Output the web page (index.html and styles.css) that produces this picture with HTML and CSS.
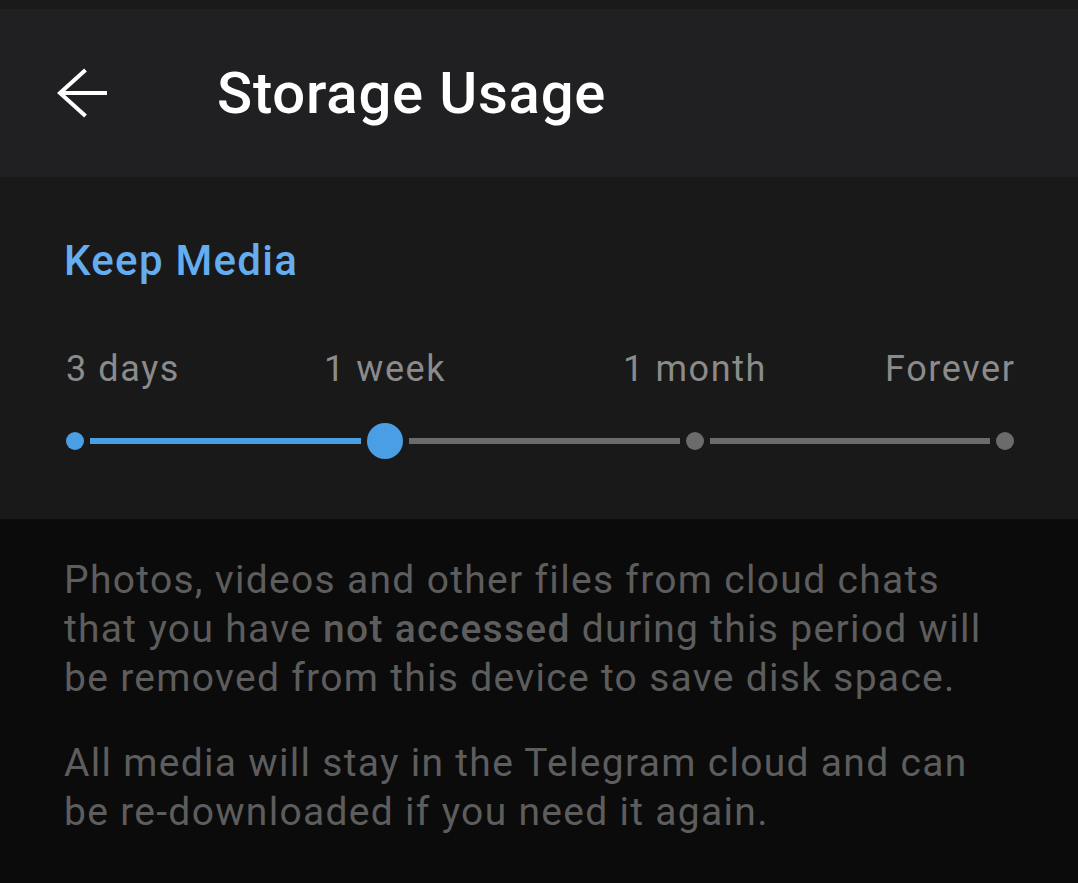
FILE: index.html
```html
<!DOCTYPE html>
<html lang="en">
<head>
    <meta charset="UTF-8">
    <meta name="viewport" content="width=device-width, initial-scale=1.0">
    <title>Storage Usage</title>
    <link rel="stylesheet" href="styles.css">
</head>
<body>

<div class="status-bar"></div>

<div class="toolbar">
    <svg class="back" width="52" height="52" viewBox="0 0 52 52">
        <path d="M2 26H50M28.5 3L3 26L28.5 49" fill="none" stroke="#fff" stroke-width="4"/>
    </svg>
    <div class="title">Storage Usage</div>
</div>

<div class="section">
    <div class="section-title">Keep Media</div>
    <div class="labels">
        <span class="label first">3 days</span>
        <span class="label">1 week</span>
        <span class="label">1 month</span>
        <span class="label last">Forever</span>
    </div>
    <div class="slider">
        <span class="dot active"></span>
        <span class="line active seg1"></span>
        <span class="knob"></span>
        <span class="line seg2"></span>
        <span class="dot"></span>
        <span class="line seg3"></span>
        <span class="dot"></span>
    </div>
</div>

<div class="hint">
    <p>Photos, videos and other files from cloud chats<br>that you have <b>not accessed</b> during this period will<br>be removed from this device to save disk space.</p>
    <p>All media will stay in the Telegram cloud and can<br>be re-downloaded if you need it again.</p>
</div>

</body>
</html>
```

FILE: styles.css
```css
body {
    margin: 0;
    background-color: #0b0b0b;
    font-family: Roboto, "Noto Sans", sans-serif;
}
.status-bar {
    height: 9px;
    background-color: #1a1a1a;
}
.toolbar {
    height: 168px;
    background-color: #202022;
    display: flex;
    align-items: center;
    padding-left: 57px;
}
.back {
    display: block;
}
.title {
    margin-left: 108px;
    color: #fff;
    font-size: 58px;
    font-weight: 500;
    line-height: 68px;
    letter-spacing: 0.8px;
}
.section {
    background-color: #19191a;
    padding: 59px 64px 58px 66px;
}
.section-title {
    color: #64aef0;
    font-size: 42px;
    font-weight: 500;
    line-height: 50px;
    letter-spacing: 1.3px;
    margin-left: -2px;
}
.labels {
    display: grid;
    grid-template-columns: 164px 310px 310px 164px;
    margin-top: 61px;
    color: #8b8b8b;
    font-size: 36px;
    line-height: 44px;
    letter-spacing: 1.6px;
}
.label {
    justify-self: center;
}
.label.first {
    justify-self: start;
}
.label.last {
    justify-self: end;
    margin-right: -1.6px;
}
.slider {
    display: flex;
    align-items: center;
    gap: 6px;
    height: 40px;
    margin-top: 30px;
}
.dot {
    width: 18px;
    height: 18px;
    border-radius: 50%;
    background-color: #6b6b6b;
    flex-shrink: 0;
}
.dot.active,
.knob {
    background-color: #4a9fe4;
}
.knob {
    width: 36px;
    height: 36px;
    border-radius: 50%;
}
.line {
    height: 6px;
    background-color: #6b6b6b;
}
.line.active {
    background-color: #4a9fe4;
}
.seg1 { width: 271px; }
.seg2 { width: 271px; }
.seg3 { width: 280px; }
.hint {
    padding: 37px 40px 0 64px;
    color: #5d5d5d;
    font-size: 39px;
    line-height: 49px;
    letter-spacing: 1.3px;
    white-space: nowrap;
}
.hint p {
    margin: 0 0 36px;
}
.hint b {
    font-weight: 500;
}
```
